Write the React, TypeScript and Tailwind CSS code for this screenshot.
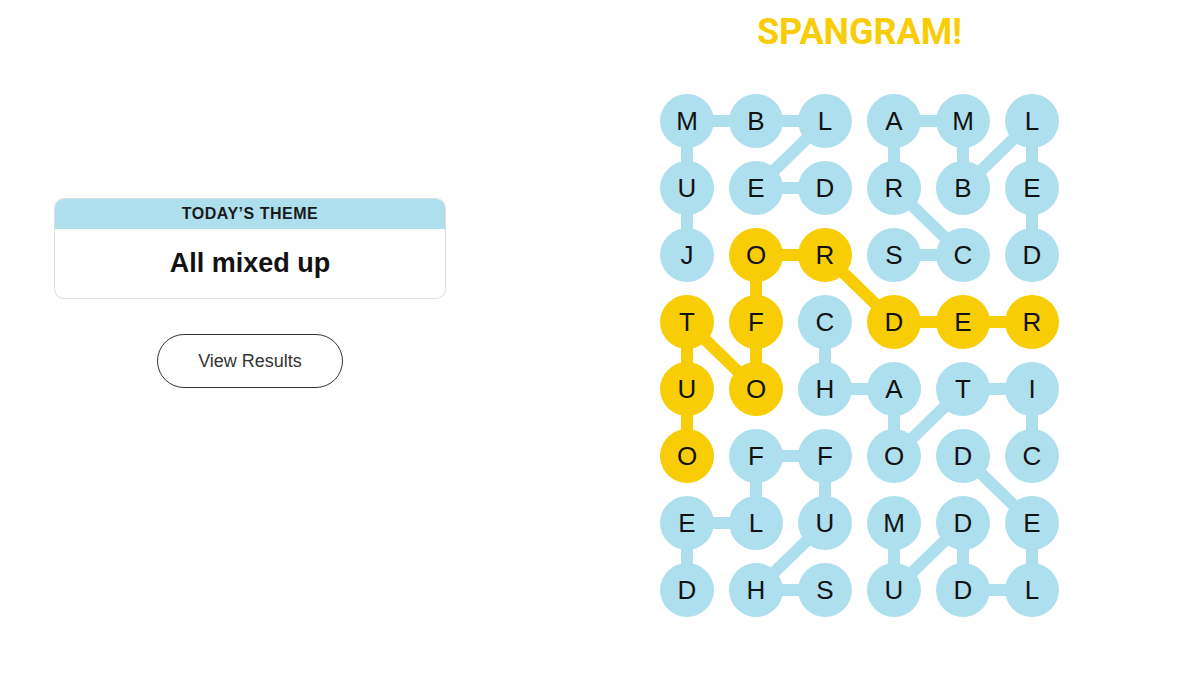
import React from 'react'

const LETTERS = [
  'MBLAML',
  'UEDRBE',
  'JORSCD',
  'TFCDER',
  'UOHATI',
  'OFFODC',
  'ELUMDE',
  'DHSUDL',
]

// cells of the spangram, as [row, col]
const SPANGRAM_PATH: [number, number][] = [
  [5, 0], [4, 0], [3, 0], [4, 1], [3, 1], [2, 1], [2, 2], [3, 3], [3, 4], [3, 5],
]

const WORDS: [number, number][][] = [
  // JUMBLED
  [[2, 0], [1, 0], [0, 0], [0, 1], [0, 2], [1, 1], [1, 2]],
  // SCRAMBLED
  [[2, 3], [2, 4], [1, 3], [0, 3], [0, 4], [1, 4], [0, 5], [1, 5], [2, 5]],
  // CHAOTIC
  [[3, 2], [4, 2], [4, 3], [5, 3], [4, 4], [4, 5], [5, 5]],
  // SHUFFLED
  [[7, 2], [7, 1], [6, 2], [5, 2], [5, 1], [6, 1], [6, 0], [7, 0]],
  // MUDDLED
  [[6, 3], [7, 3], [6, 4], [7, 4], [7, 5], [6, 5], [5, 4]],
]

const CELL = 54
const COL_STEP = 69
const ROW_STEP = 67
const BLUE = '#aedfee'
const YELLOW = '#f8cd05'

const cx = (c: number) => CELL / 2 + c * COL_STEP
const cy = (r: number) => CELL / 2 + r * ROW_STEP

function pathPoints(path: [number, number][]) {
  return path.map(([r, c]) => `${cx(c)},${cy(r)}`).join(' ')
}

const spangramCells = new Set(SPANGRAM_PATH.map(([r, c]) => `${r},${c}`))

function Board() {
  const width = CELL + 5 * COL_STEP
  const height = CELL + 7 * ROW_STEP
  return (
    <div className="relative" style={{ width, height }}>
      <svg className="absolute inset-0" width={width} height={height} viewBox={`0 0 ${width} ${height}`}>
        {WORDS.map((w, i) => (
          <polyline key={i} points={pathPoints(w)} fill="none" stroke={BLUE} strokeWidth={12} strokeLinejoin="round" />
        ))}
        <polyline points={pathPoints(SPANGRAM_PATH)} fill="none" stroke={YELLOW} strokeWidth={12} strokeLinejoin="round" />
      </svg>
      <div className="relative grid grid-cols-6 gap-x-[15px] gap-y-[13px]">
        {LETTERS.map((row, r) =>
          row.split('').map((ch, c) => {
            const spangram = spangramCells.has(`${r},${c}`)
            return (
              <div
                key={`${r}-${c}`}
                className={`flex h-[54px] w-[54px] items-center justify-center rounded-full text-[26px] text-[#121212] ${
                  spangram ? 'bg-[#f8cd05]' : 'bg-[#aedfee]'
                }`}
              >
                {ch}
              </div>
            )
          })
        )}
      </div>
    </div>
  )
}

export default function App() {
  return (
    <div className="flex h-[675px] w-[1200px] bg-white font-['Liberation_Sans',Arial,sans-serif]">
      <div className="w-[500px] pl-[54px] pt-[198px]">
        <div className="w-[392px] overflow-hidden rounded-[10px] border border-[#dedede]">
          <div className="flex h-[30px] items-center justify-center bg-[#aedfee] text-[16px] font-bold tracking-[0.5px] text-[#1a1a1a]">
            TODAY’S THEME
          </div>
          <div className="flex h-[69px] items-center justify-center text-[27px] font-bold text-[#121212]">
            All mixed up
          </div>
        </div>
        <div className="mt-[35px] flex w-[392px] justify-center">
          <button className="h-[54px] w-[186px] rounded-full border border-[#333] text-[18px] text-[#333]">
            View Results
          </button>
        </div>
      </div>
      <div className="flex flex-col pl-[160px]">
        <div className="flex h-[94px] items-start justify-center pt-[5px] font-['Roboto',sans-serif] text-[36px] font-bold text-[#f8cd05]">
          SPANGRAM!
        </div>
        <Board />
      </div>
    </div>
  )
}
